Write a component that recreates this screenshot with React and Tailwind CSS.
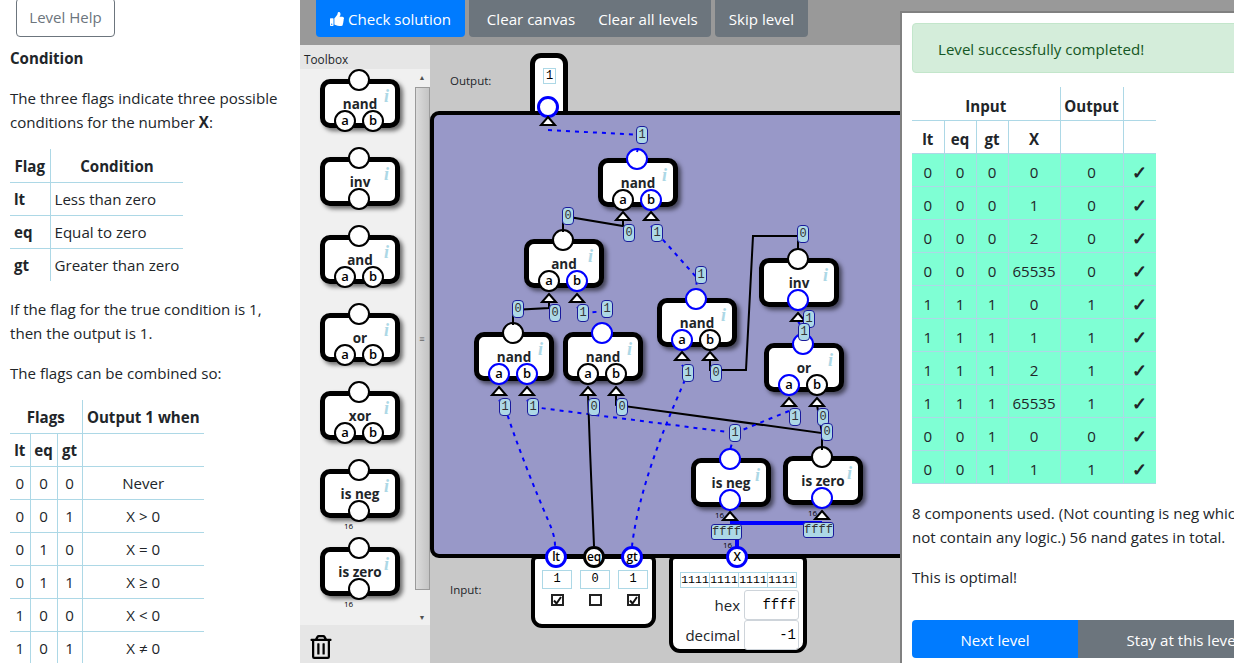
import React from 'react';
import { FaThumbsUp, FaRegTrashAlt } from 'react-icons/fa';

const MONO = "font-['Liberation_Mono',monospace]";

// one logic gate, positions of ports are relative to the box
const Gate = ({ label, inputs = [], bottom, output = 'k', x, y, free, width16 }) => {
  const border = (v) => (v === 'b' ? 'border-[#0000ff]' : 'border-black');
  return (
    <div
      className={`${free ? 'absolute' : 'relative'} w-[80px] h-[49px] bg-white rounded-[10px] border-[5px] border-black shadow-[3px_3px_4px_rgba(0,0,0,0.55)] text-[#212529]`}
      style={free ? { left: x - 1, top: y - 1 } : undefined}>
      <div className="absolute left-0 right-0 top-[11px] text-center text-[13.5px] leading-[18px] font-bold">{label}</div>
      <div className="absolute left-[59px] top-[2px] text-[18px] leading-[20px] font-bold italic text-[#add8e6] font-['Liberation_Serif',serif]">i</div>
      <div className={`absolute left-[23px] -top-[15px] w-[22px] h-[22px] rounded-full bg-white border-2 ${border(output)}`} />
      {inputs.map((p) => (
        <div key={p.n} className={`absolute ${p.n === 'a' ? 'left-[9px]' : 'left-[37px]'} top-[26px] w-[22px] h-[22px] rounded-full bg-white border-2 ${border(p.v)} flex items-center justify-center text-[13px] font-semibold text-black`}>
          {p.n}
        </div>
      ))}
      {bottom && (
        <div className={`absolute left-[23px] top-[26px] w-[22px] h-[22px] rounded-full bg-white border-2 ${border(bottom)}`} />
      )}
      {width16 && (
        <div className="absolute left-[19px] top-[47px] text-[8px] leading-[9px] text-black">16</div>
      )}
    </div>
  );
};

const Wire = ({ d, on }) => (
  <path d={d} fill="none" stroke={on ? '#0000ff' : '#000'} strokeWidth="2" strokeDasharray={on ? '4 5' : undefined} />
);

const Tri = ({ x, y }) => (
  <polygon points={`${x},${y} ${x + 7},${y + 8} ${x - 7},${y + 8}`} fill="#fff" stroke="#000" strokeWidth="2" />
);

// wire value tag
const Tag = ({ x, y, v }) => (
  <div
    className={`absolute w-[12px] h-[18px] -ml-[6px] -mt-[9px] rounded-[4px] bg-[#add8e6] border border-[#1a1a9c] text-[12px] leading-[16px] text-center text-[#333] ${MONO}`}
    style={{ left: x, top: y }}>
    {v}
  </div>
);

const Port = ({ x, label, on }) => (
  <div
    className={`absolute top-[546px] w-[22px] h-[22px] -ml-[11px] rounded-full bg-white border-[3px] ${on ? 'border-[#0000ff]' : 'border-black'} flex items-center justify-center text-[12px] tracking-tight font-semibold text-black z-10`}
    style={{ left: x }}>
    {label}
  </div>
);

const gates = [
  { label: 'nand', x: 599, y: 159, inputs: [{ n: 'a', v: 'k' }, { n: 'b', v: 'b' }], output: 'b' },
  { label: 'and', x: 525, y: 240, inputs: [{ n: 'a', v: 'k' }, { n: 'b', v: 'b' }] },
  { label: 'nand', x: 475, y: 333, inputs: [{ n: 'a', v: 'b' }, { n: 'b', v: 'b' }] },
  { label: 'nand', x: 564, y: 333, inputs: [{ n: 'a', v: 'k' }, { n: 'b', v: 'k' }], output: 'b' },
  { label: 'nand', x: 658, y: 299, inputs: [{ n: 'a', v: 'b' }, { n: 'b', v: 'k' }], output: 'b' },
  { label: 'inv', x: 760, y: 259, bottom: 'b' },
  { label: 'or', x: 765, y: 344, inputs: [{ n: 'a', v: 'b' }, { n: 'b', v: 'k' }], output: 'b' },
  { label: 'is neg', x: 692, y: 459, bottom: 'b', output: 'b' },
  { label: 'is zero', x: 784, y: 457, bottom: 'b' },
];

const tags = [
  [642, 135, 1], [568, 216, 0], [629, 233, 0], [657, 233, 1], [701, 275, 1], [518, 309, 0], [555, 313, 0],
  [583, 313, 1], [607, 309, 1], [505, 407, 1], [533, 407, 1], [594, 407, 0], [622, 407, 0], [688, 373, 1],
  [716, 373, 0], [803, 234, 0], [809, 319, 1], [804, 332, 1], [795, 417, 1], [823, 417, 0], [827, 432, 0], [735, 433, 1],
];

const tris = [[548, 117], [623, 212], [651, 212], [549, 294], [577, 294], [499, 387], [527, 387], [588, 387], [616, 387],
  [682, 352], [710, 352], [798, 313], [789, 398], [817, 398], [730, 512], [822, 511]];

const Board = () => (
  <div className="relative flex-1 bg-[#c8c8c8] overflow-hidden">
    {/* coordinates here are page coordinates, shifted by the wrapper */}
    <div className="absolute -left-[430px] -top-[45px] w-[1234px] h-[663px]">
      <div className="absolute left-[450px] top-[74px] text-[11.5px] leading-[14px] text-[#212529]">Output:</div>
      <div className="absolute left-[450px] top-[583px] text-[11.5px] leading-[14px] text-[#212529]">Input:</div>

      <div className="absolute left-[530px] top-[53px] w-[38px] h-[70px] bg-white border-[5px] border-black rounded-[11px]">
        <div className={`absolute left-[8px] top-[10px] w-[13px] h-[16px] border border-[#add8e6] text-[12px] leading-[14px] text-center text-black ${MONO}`}>1</div>
      </div>

      <div className="absolute left-[430px] top-[111px] w-[520px] h-[447px] bg-[#9898c8] border-[4px] border-black rounded-[9px]" />
      <div className="absolute left-[537px] top-[96px] w-[22px] h-[22px] rounded-full bg-white border-[3px] border-[#0000ff]" />

      <div className="absolute left-[531px] top-[555px] w-[125px] h-[73px] bg-white border-[4px] border-black rounded-b-[11px] rounded-t-[6px]">
        <div className="flex gap-[8px] pl-[7px] pt-[11px]">
          {[1, 0, 1].map((v, i) => (
            <div key={i} className={`w-[30px] h-[19px] border border-[#add8e6] text-[12px] leading-[17px] text-center text-black ${MONO}`}>{v}</div>
          ))}
        </div>
        <div className="flex gap-[25px] pl-[16px] pt-[5px]">
          {[1, 0, 1].map((v, i) => (
            <div key={i} className="w-[13px] h-[12px] border-2 border-[#222] flex items-center justify-center">
              {v === 1 && (
                <svg width="9" height="9" viewBox="0 0 9 9">
                  <path d="M1 4.5 L3.5 7.5 L8 1" fill="none" stroke="#111" strokeWidth="2" />
                </svg>
              )}
            </div>
          ))}
        </div>
      </div>

      <div className="absolute left-[669px] top-[555px] w-[138px] h-[98px] bg-white border-[4px] border-black rounded-b-[11px] rounded-t-[6px]">
        <div className={`flex ml-[7px] mt-[13px] w-[117px] h-[16px] border border-[#add8e6] text-[11.5px] leading-[14px] text-black ${MONO}`}>
          {['1111', '1111', '1111', '1111'].map((b, i) => (
            <div key={i} className={`flex-1 text-center ${i > 0 ? 'border-l border-[#add8e6]' : ''}`}>{b}</div>
          ))}
        </div>
        <div className="flex items-center justify-end h-[30px] mt-[2px] pr-[4px] gap-[4px]">
          <span className="text-[15px] text-[#212529]">hex</span>
          <div className={`w-[55px] h-[30px] border border-[#ced4da] rounded-[3px] text-right pr-[2px] text-[14px] leading-[28px] text-black ${MONO}`}>ffff</div>
        </div>
        <div className="flex items-center justify-end h-[30px] pr-[4px] gap-[4px]">
          <span className="text-[15px] text-[#212529]">decimal</span>
          <div className={`w-[55px] h-[30px] border border-[#ced4da] rounded-[3px] text-right pr-[2px] text-[14px] leading-[28px] text-black ${MONO}`}>-1</div>
        </div>
      </div>

      {gates.map((g, i) => (
        <Gate key={i} {...g} free />
      ))}

      <svg className="absolute left-0 top-0" width="1234" height="663">
        <Wire on d="M548 130 L642 135 L637 152" />
        <Wire d="M563 232 L563 216 L623 226 L623 220" />
        <Wire on d="M651 226 L657 233 L697 278 L696 290" />
        <Wire d="M513 325 L513 310 L549 308 L549 302" />
        <Wire on d="M577 307 L583 313 L607 311 L602 322" />
        <Wire on d="M499 400 L505 407 C 515 440 535 490 548 520 C 553 532 555 538 555 546" />
        <Wire on d="M527 400 L533 407 L735 433 L730 450" />
        <Wire d="M588 395 L590 450 L594 546" />
        <Wire d="M616 395 L616 405 L822 433 L822 450" />
        <Wire on d="M682 365 L688 373 C 672 410 640 480 632 546" />
        <Wire d="M710 360 L710 370 L746 370 L753 236 L798 236 L798 250" />
        <Wire on d="M798 321 L804 332" />
        <Wire on d="M789 411 L735 433" />
        <Wire d="M817 405 L822 433" />
        <path d="M730 523 L822 523" stroke="#0000ff" strokeWidth="4" />
        <path d="M737 540 L737 548" stroke="#0000ff" strokeWidth="4" />
        {tris.map(([x, y]) => (
          <Tri key={`${x}-${y}`} x={x} y={y} />
        ))}
      </svg>

      {tags.map(([x, y, v]) => (
        <Tag key={`${x}-${y}`} x={x} y={y} v={v} />
      ))}

      <div className={`absolute left-[711px] top-[524px] w-[31px] h-[16px] rounded-[3px] bg-[#add8e6] border border-[#1a1a9c] text-[12px] leading-[14px] text-center text-[#333] ${MONO}`}>ffff</div>
      <div className={`absolute left-[803px] top-[522px] w-[31px] h-[16px] rounded-[3px] bg-[#add8e6] border border-[#1a1a9c] text-[12px] leading-[14px] text-center text-[#333] ${MONO}`}>ffff</div>
      <div className="absolute left-[715px] top-[510px] text-[8px] leading-[9px] text-black">16</div>
      <div className="absolute left-[808px] top-[508px] text-[8px] leading-[9px] text-black">16</div>
      <div className="absolute left-[723px] top-[540px] text-[8px] leading-[9px] text-black">16</div>

      <Port x={556} label="lt" on />
      <Port x={594} label="eq" />
      <Port x={632} label="gt" on />
      <Port x={737} label="X" on />
    </div>
  </div>
);

const Toolbox = () => (
  <div className="w-[130px] flex flex-col bg-[#e6e6e6]">
    <div className="h-[24px] pl-[4px] pt-[6px] text-[11.8px] leading-[16px] text-[#212529]">Toolbox</div>
    <div className="h-[556px] flex bg-[#f0f0f0]">
      <div className="w-[114px] flex flex-col items-start pl-[20px] pt-[10px] gap-[29px]">
        <Gate label="nand" inputs={[{ n: 'a', v: 'k' }, { n: 'b', v: 'k' }]} />
        <Gate label="inv" bottom="k" />
        <Gate label="and" inputs={[{ n: 'a', v: 'k' }, { n: 'b', v: 'k' }]} />
        <Gate label="or" inputs={[{ n: 'a', v: 'k' }, { n: 'b', v: 'k' }]} />
        <Gate label="xor" inputs={[{ n: 'a', v: 'k' }, { n: 'b', v: 'k' }]} />
        <Gate label="is neg" bottom="k" width16 />
        <Gate label="is zero" bottom="k" width16 />
      </div>
      <div className="w-[16px] flex flex-col items-center bg-[#f0f0f0]">
        <div className="h-[18px] flex items-center text-[7px] text-[#505050]">▲</div>
        <div className="w-[15px] h-[503px] bg-gradient-to-r from-[#dcdcdc] to-[#c4c4c4] border border-[#9a9a9a] flex items-center justify-center text-[9px] text-[#666]">≡</div>
        <div className="flex-1 flex items-end pb-[2px] text-[7px] text-[#505050]">▼</div>
      </div>
    </div>
    <div className="flex-1 pl-[9px] pt-[10px] text-black text-[24px]">
      <FaRegTrashAlt />
    </div>
  </div>
);

const th = 'border-[#add8e6] font-bold text-center whitespace-nowrap';

const LeftPanel = () => (
  <div className="w-[300px] shrink-0 bg-white text-[#212529] pl-[10px] overflow-hidden">
    <button className="ml-[6px] -mt-[2px] block w-[99px] h-[39px] rounded-[4px] border border-[#6c757d] text-[#6c757d] text-[15px]">Level Help</button>
    <div className="mt-[9px] leading-[24px] font-bold">Condition</div>
    <p className="mt-[16px] leading-[24px]">The three flags indicate three possible<br />conditions for the number <b>X</b>:</p>
    <table className="mt-[15px] border-collapse whitespace-nowrap">
      <thead>
        <tr className="h-[33px]">
          <th className={`${th} w-[40px] pt-[2px] border-r border-b`}>Flag</th>
          <th className={`${th} w-[130px] pt-[2px] border-b`}>Condition</th>
        </tr>
      </thead>
      <tbody>
        {[['lt', 'Less than zero'], ['eq', 'Equal to zero'], ['gt', 'Greater than zero']].map(([a, b], i) => (
          <tr key={a} className="h-[33px]">
            <td className={`font-bold px-[4px] pt-[2px] border-r border-[#add8e6] ${i < 2 ? 'border-b' : ''}`}>{a}</td>
            <td className={`px-[4px] pt-[2px] border-[#add8e6] ${i < 2 ? 'border-b' : ''}`}>{b}</td>
          </tr>
        ))}
      </tbody>
    </table>
    <p className="mt-[16px] leading-[24px]">If the flag for the true condition is 1,<br />then the output is 1.</p>
    <p className="mt-[16px] leading-[24px]">The flags can be combined so:</p>
    <table className="mt-[15px] border-collapse whitespace-nowrap">
      <thead>
        <tr className="h-[33px]">
          <th colSpan={3} className={`${th} pt-[2px] border-r border-b`}>Flags</th>
          <th className={`${th} w-[122px] pt-[2px] border-b`}>Output 1 when</th>
        </tr>
        <tr className="h-[33px]">
          <th className={`${th} w-[20px] pt-[2px] border-r border-b`}>lt</th>
          <th className={`${th} w-[27px] pt-[2px] border-r border-b`}>eq</th>
          <th className={`${th} w-[25px] pt-[2px] border-r border-b`}>gt</th>
          <th className={`${th} border-b`}></th>
        </tr>
      </thead>
      <tbody>
        {[['0', '0', '0', 'Never'], ['0', '0', '1', 'X > 0'], ['0', '1', '0', 'X = 0'], ['0', '1', '1', 'X ≥ 0'], ['1', '0', '0', 'X < 0'], ['1', '0', '1', 'X ≠ 0']].map((r) => (
          <tr key={r.join()} className="h-[33px] text-center">
            {r.map((c, i) => (
              <td key={i} className={`pt-[2px] border-[#add8e6] ${i < 3 ? 'border-r' : ''} ${r[3] === 'X ≠ 0' ? '' : 'border-b'}`}>{c}</td>
            ))}
          </tr>
        ))}
      </tbody>
    </table>
  </div>
);

const results = [
  [0, 0, 0, 0, 0], [0, 0, 0, 1, 0], [0, 0, 0, 2, 0], [0, 0, 0, 65535, 0], [1, 1, 1, 0, 1],
  [1, 1, 1, 1, 1], [1, 1, 1, 2, 1], [1, 1, 1, 65535, 1], [0, 0, 1, 0, 0], [0, 0, 1, 1, 1],
];

const ResultCard = () => (
  <div className="mt-[11px] flex-1 w-[400px] shrink-0 bg-white border-l-2 border-t-2 border-[#808080] text-[#212529] pl-[10px] pt-[10px]">
    <div className="h-[50px] w-[390px] rounded-[4px] bg-[#d4edda] border border-[#c3e6cb] text-[#155724] pl-[25px] leading-[50px]">Level successfully completed!</div>
    <table className="mt-[14px] border-collapse text-center">
      <thead>
        <tr className="h-[33px]">
          <th colSpan={4} className={`${th} pt-[6px] border-r border-b`}>Input</th>
          <th className={`${th} pt-[6px] border-r border-b`}>Output</th>
          <th className={`${th} border-b`}></th>
        </tr>
        <tr className="h-[33px]">
          <th className={`${th} w-[32px] pt-[6px] border-r border-b`}>lt</th>
          <th className={`${th} w-[32px] pt-[6px] border-r border-b`}>eq</th>
          <th className={`${th} w-[32px] pt-[6px] border-r border-b`}>gt</th>
          <th className={`${th} w-[52px] pt-[6px] border-r border-b`}>X</th>
          <th className={`${th} w-[63px] border-r border-b`}></th>
          <th className={`${th} w-[33px] border-b`}></th>
        </tr>
      </thead>
      <tbody>
        {results.map((r, i) => (
          <tr key={i} className="h-[33px] bg-[#7fffd4]">
            {r.map((c, j) => (
              <td key={j} className="pt-[6px] border-r border-b border-[#add8e6]">{c}</td>
            ))}
            <td className="pt-[4px] border-b border-[#add8e6] text-[18px] leading-[22px] font-bold">✓</td>
          </tr>
        ))}
      </tbody>
    </table>
    <p className="mt-[17px] leading-[24px] whitespace-nowrap">8 components used. (Not counting is neg which do<br />not contain any logic.) 56 nand gates in total.</p>
    <p className="mt-[16px] leading-[24px]">This is optimal!</p>
    <div className="mt-[31px] flex">
      <button className="w-[166px] h-[38px] pt-[3px] rounded-l-[4px] bg-[#007bff] text-white">Next level</button>
      <button className="w-[210px] h-[38px] pt-[3px] rounded-r-[4px] bg-[#6c757d] text-white">Stay at this level</button>
    </div>
  </div>
);

export default function App() {
  return (
    <div className="w-[1234px] h-[663px] flex overflow-hidden text-[15.1px] font-['Open_Sans',sans-serif]">
      <LeftPanel />
      <div className="w-[600px] shrink-0 flex flex-col bg-[#999999] relative">
        <div className="h-[45px] shrink-0 flex items-start pl-[16px] gap-[4px] text-white">
          <button className="-mt-px h-[38px] w-[149px] pt-[2px] rounded-b-[4px] bg-[#007bff] flex items-center justify-center gap-[4px]">
            <FaThumbsUp className="text-[14px]" /> Check solution
          </button>
          <div className="flex -mt-px h-[38px] w-[242px] pt-[2px] rounded-b-[4px] bg-[#6c757d]">
            <button className="w-[124px]">Clear canvas</button>
            <button className="w-[110px]">Clear all levels</button>
          </div>
          <button className="-mt-px h-[38px] w-[93px] pt-[2px] rounded-b-[4px] bg-[#6c757d]">Skip level</button>
        </div>
        <div className="flex-1 flex min-h-0">
          <Toolbox />
          <Board />
        </div>
      </div>
      <div className="flex-1 flex flex-col bg-[#999999] overflow-hidden">
        <ResultCard />
      </div>
    </div>
  );
}
